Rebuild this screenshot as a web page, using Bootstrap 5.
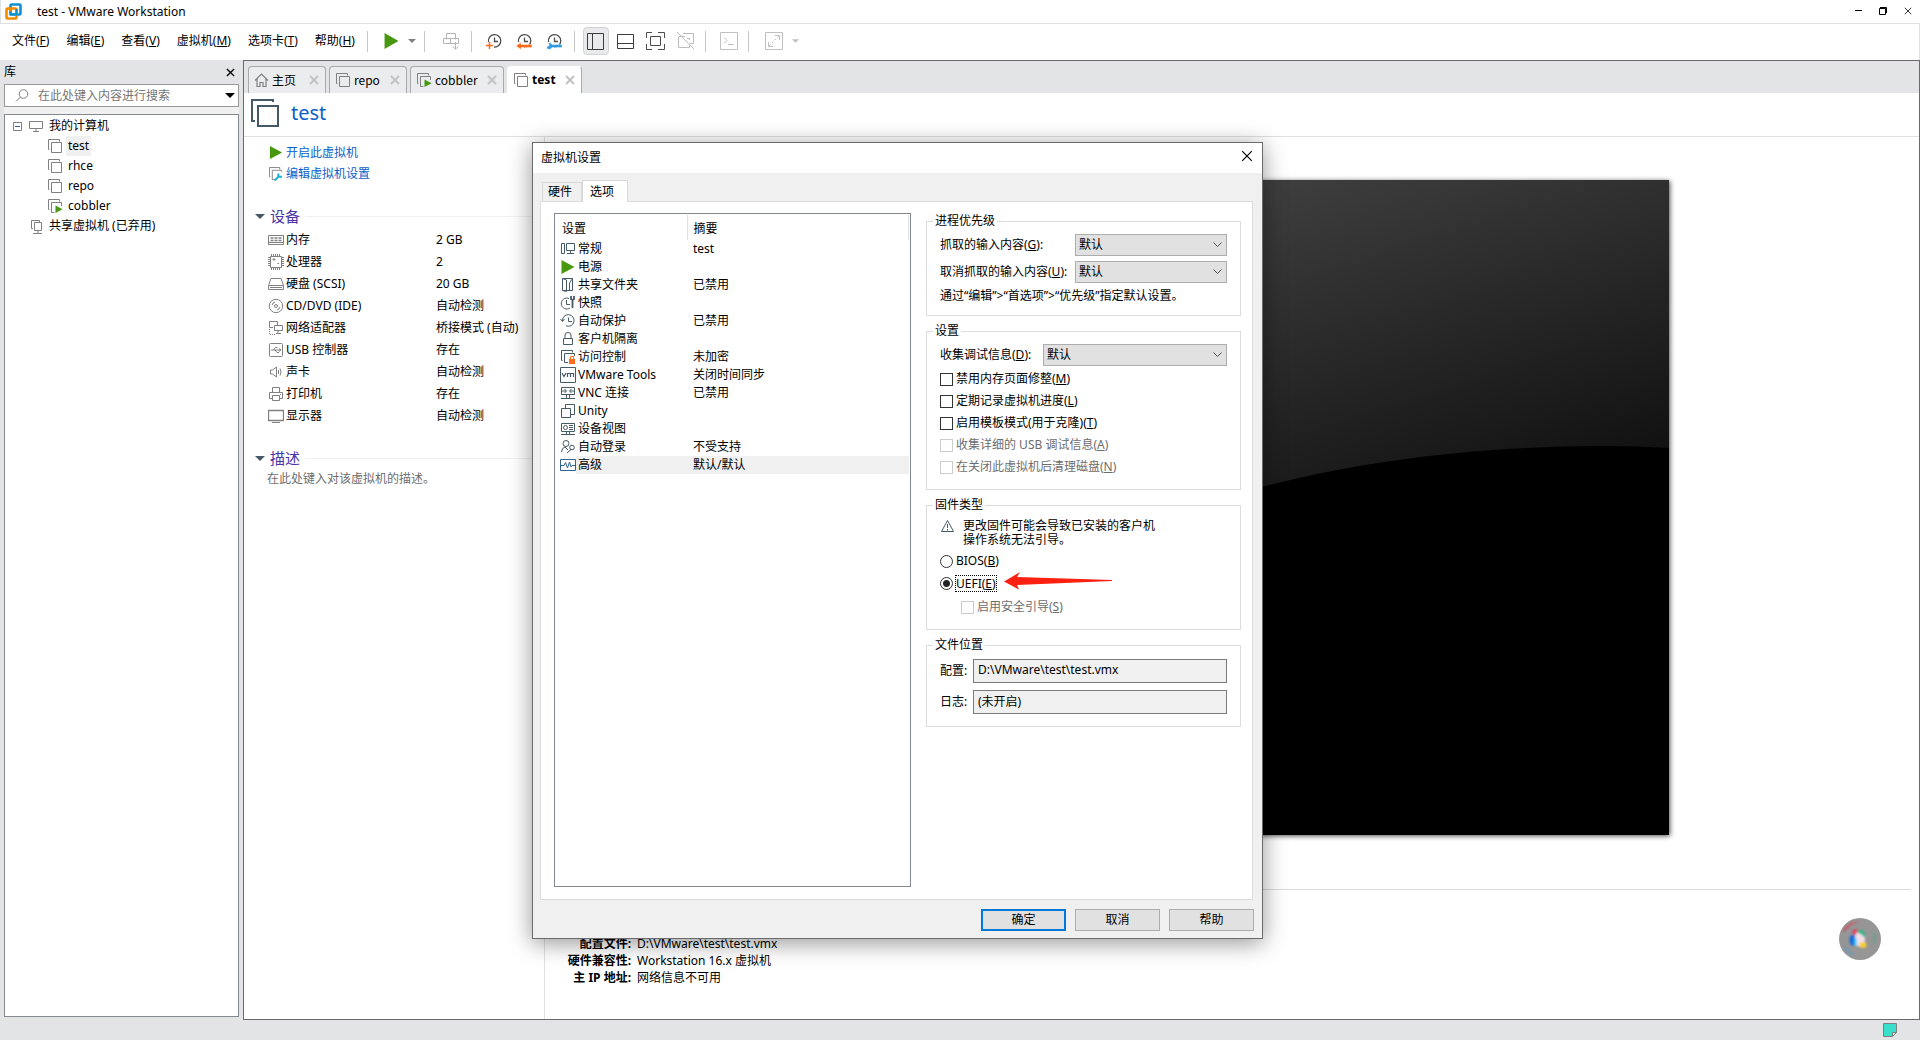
<!DOCTYPE html>
<html lang="zh-CN">
<head>
<meta charset="utf-8">
<meta name="viewport" content="width=device-width, initial-scale=1">
<title>test - VMware Workstation</title>
<link href="https://cdn.jsdelivr.net/npm/bootstrap@5.3.0/dist/css/bootstrap.min.css" rel="stylesheet">
<style>
  body { font: 12px/16px "Noto Sans", "Noto Sans CJK SC", sans-serif; color: #000; background: #e3e4e6; }
  button, input, select { font: inherit; color: inherit; }
  svg { display: block; flex: none; fill: none; stroke: #808080; }
  .plain { background: none; border: 0; padding: 0; }
  .titlebar { height: 24px; border-bottom: 1px solid #e0e0e0; }
  .titlebar h1 { font-size: 12px; line-height: 16px; margin: 0 0 0 15px; }
  .winbtns { gap: 17px; padding: 0 8px 2px; }
  .winbtns svg { stroke: #000; }
  .menubar { height: 36px; border-right: 1px solid #e0e0e0; padding: 0 0 2px 12px; gap: 12px; }
  .menus { gap: 17px; }
  .menus a { color: #000; text-decoration: none; }
  .vsep { width: 1px; height: 21px; background: #c6c6c6; }
  .tool { width: 30px; height: 28px; display: flex; align-items: center; justify-content: center; }
  .tool.on { background: #e9eaeb; border: 1px solid #d2d2d2; border-radius: 4px; width: 26px; margin: 0 2px; }
  .withcaret { display: flex; align-items: center; gap: 9px; }
  .workspace { min-height: 0; }
  .library { width: 243px; padding: 0 4px 3px; }
  .library header { height: 24px; }
  .library header svg { stroke: #000; stroke-width: 1.5; }
  .searchbox { height: 23px; border: 1px solid #999; background: #fff; padding: 0 3px 0 10px; gap: 9px; }
  .searchbox input { border: 0; outline: 0; min-width: 0; background: none; padding: 0; }
  .searchbox input::placeholder { color: #757575; opacity: 1; }
  .searchgap { height: 7px; background: #f0f0f0; }
  .tree { border: 1px solid #828790; padding: 1px 0 0 8px; }
  .tree li { height: 20px; display: flex; align-items: center; gap: 3px; }
  .tree li span { padding: 0 2px; line-height: 20px; }
  .tree .root { gap: 4px; }
  .tree .host { margin-left: 3px; }
  .tree .leaf { padding-left: 34px; }
  .tree .shared { padding-left: 17px; }
  .tree .picked { background: #f0f0f0; }
  .workarea { border: 1px solid #6a6a6c; min-width: 0; }
  .doctabs { height: 32px; padding: 5px 4px 0; gap: 3px; background: #e3e4e6; }
  .doctab { height: 27px; padding: 0 6px 0 5px; border: 1px solid #a9a9a9; border-bottom: 0; border-radius: 4px 4px 0 0; background: #ebecee; width: 78px; display: flex; align-items: center; gap: 3px; font-family: "Noto Sans CJK SC", sans-serif; }
  .doctab.wide { width: 94px; }
  .doctab.active { background: #fff; width: 75px; border-left-color: #fff; border-top-color: #fff; font-weight: 700; font-family: "Noto Sans", sans-serif; }
  .doctab svg.x { stroke: #c3c3c3; stroke-width: 2; margin-left: auto; }
  .vmhead { height: 44px; border-bottom: 1px solid #e0e0e0; padding: 0 7px 2px; gap: 11px; }
  .vmhead h2 { font-size: 20px; line-height: 24px; color: #0a61c9; margin: 0 0 2px; font-weight: 400; }
  .summary { width: 301px; border-right: 1px solid #e0e0e0; }
  .summary a { display: flex; align-items: center; gap: 3px; color: #0a61c9; text-decoration: none; height: 21px; }
  .cmds { padding: 5px 0 0 25px; height: 66px; }
  .summary h3 { font-size: 15px; line-height: 18px; color: #4a36a8; margin: 0; font-weight: 400; }
  .sect { gap: 5px; padding-left: 11px; height: 26px; }
  .sect hr { margin: 0; border-color: #c8c8c8; }
  .devs { margin: 0 0 18px 24px; }
  .devs td { height: 22px; padding: 0; }
  .devs td:first-child { width: 168px; }
  .devname { display: flex; align-items: center; gap: 2px; }
  .note { color: #6e6e6e; padding-left: 23px; margin: 0; }
  .stage { min-width: 0; padding: 43px 8px 0; }
  .screen { width: 874px; max-width: 100%; height: 655px; background: linear-gradient(162deg, #505050, #0e0e0e 62%); box-shadow: 1px 1px 5px rgba(0,0,0,.7); overflow: hidden; }
  .screen svg { width: 100%; height: 100%; stroke: none; }
  .facts { margin-top: 54px; border-top: 1px solid #dcdcdc; padding-top: 28px; }
  .facts dl { display: grid; grid-template-columns: 78px 1fr; column-gap: 6px; margin: 0; line-height: 17px; }
  .facts dt { text-align: right; }
  .facts dd { margin: 0; }
  .statusbar { height: 20px; padding-right: 23px; }
  .orb { position: absolute; right: 39px; bottom: 80px; width: 42px; height: 42px; }
  .dlg { position: absolute; left: 532px; top: 142px; width: 731px; background: #f0f0f0; border: 1px solid #6b6b6b; box-shadow: 0 4px 22px rgba(0,0,0,.42); }
  .dlg header { height: 30px; background: #fff; padding: 0 9px 0 8px; }
  .dlg header h2 { font-size: 12px; line-height: 16px; margin: 0; font-weight: 400; }
  .dlg header svg { stroke: #000; }
  .dlg .nav { padding: 7px 9px 0; align-items: flex-end; }
  .dlgtab { border: 1px solid #d9d9d9; border-bottom: 0; height: 19px; padding: 0 5px; background: #f0f0f0; width: 40px; line-height: 18px; text-align: left; }
  .dlgtab.active { background: #fff; height: 22px; width: 46px; padding: 0 7px; margin-bottom: -1px; position: relative; line-height: 20px; }
  .panel { margin: 0 9px 0 7px; border: 1px solid #dcdcdc; background: #fff; padding: 11px 11px 12px 13px; gap: 15px; }
  .optlist { width: 357px; height: 674px; border: 1px solid #828790; padding: 1px; }
  .optlist table { width: 100%; table-layout: fixed; }
  .optlist th { height: 25px; font-weight: 400; padding: 2px 6px 0; border-right: 1px solid #e0e0e0; }
  .optlist thead th:first-child { width: 131px; }
  .optlist td { height: 18px; padding: 0 6px; white-space: nowrap; }
  .optlist td:first-child { padding-left: 4px; }
  .optlist tr.on td { background: #f0f0f0; }
  .optlist tr.on td:first-child { background: linear-gradient(to right, #fff 20px, #f0f0f0 20px); }
  .optlist tr.on svg { stroke: #2f6390; }
  .optname { display: flex; align-items: center; gap: 2px; height: 18px; }
  .optname svg, .warn { stroke: #475a68; }
  .box { border: 1px solid #dcdcdc; padding: 0 13px; margin: 0 0 7px; }
  .box legend { float: none; font-size: 12px; line-height: 16px; width: auto; margin: 0 0 0 -7px; padding: 0 2px; }
  .box.prio { height: 103px; }
  .box.opts { height: 167px; }
  .box.firm { height: 133px; }
  .box.files { height: 90px; margin: 0; }
  .dropdown-box { appearance: none; width: 152px; border: 1px solid #adadad; border-radius: 0; height: 22px; line-height: 16px; padding: 2px 20px 2px 3px; background: #e1e1e1 url("data:image/svg+xml,%3Csvg xmlns='http://www.w3.org/2000/svg' width='9' height='6'%3E%3Cpath d='M.5.5l4 4 4-4' fill='none' stroke='%23505050'/%3E%3C/svg%3E") no-repeat right 4px center; }
  .dropdown-box.long { width: 184px; }
  .line { display: flex; align-items: center; height: 22px; position: relative; }
  .line.tall { height: 27px; }
  .line.first { margin-top: 2px; }
  .line.path { height: 31px; }
  .line.path label { width: 33px; }
  .line.pick { gap: 3px; }
  .line.nested { padding-left: 21px; height: 26px; }
  .line input[type=checkbox], .line input[type=radio] { appearance: none; width: 13px; height: 13px; margin: 0; border: 1px solid #333; background: #fff; flex: none; }
  .line input[type=radio] { border-radius: 50%; }
  .line input[type=radio]:checked { background: radial-gradient(#222 0 3px, #fff 4px); }
  .line input:disabled { border-color: #ccc; }
  .line input:disabled + label { color: #6d6d6d; }
  .alertline { line-height: 14px; margin: 6px 0 3px; gap: 8px; }
  .focused { outline: 1px dotted #000; line-height: 15px; }
  .pathbox { flex: 1; min-width: 0; height: 24px; border: 1px solid #7a7a7a; border-radius: 0; background: #f0f0f0; padding: 0 4px 2px; }
  .dlg footer { padding: 9px 8px 7px; gap: 9px; }
  .dlgbtn { width: 85px; height: 22px; border: 1px solid #adadad; background: #e1e1e1; padding: 0; line-height: 20px; }
  .dlgbtn.default { border: 2px solid #0078d7; line-height: 18px; }
  .arrow { position: absolute; left: 64px; top: 0; stroke: none; }
</style>
</head>
<body class="d-flex flex-column vh-100 overflow-hidden position-relative">
<svg width="0" height="0" class="position-absolute">
  <defs>
    <symbol id="vm" viewBox="0 0 16 16"><path d="M2.500 11.500H1.500V1.500H12.500V3.500M4.500 4.500H14.500V14.500H4.500z"/></symbol>
    <symbol id="vmrun" viewBox="0 0 16 16"><path d="M2.500 11.500H1.500V1.500H12.500V3.500M7.500 14.500H4.500V4.500H14.500V8"/><path d="M8.500 7.500V15L15.500 11.300z" fill="#47980f" stroke="none"/></symbol>
    <symbol id="play" viewBox="0 0 16 16"><path d="M1.500 1V15L14.500 8z" fill="#47980f" stroke="none"/></symbol>
    <symbol id="clock" viewBox="0 0 16 16"><path d="M2.500 9A6.200 6.200 0 1 1 8 14M8.500 4.500V8.500H12" stroke="#4c4c4c" stroke-width="1.300"/></symbol>
    <symbol id="x" viewBox="0 0 10 10"><path d="M1 1L9 9M9 1L1 9"/></symbol>
    <symbol id="caret" viewBox="0 0 8 4"><path d="M0 0H8L4 4z" fill="#808080" stroke="none"/></symbol>
  </defs>
</svg>

<div class="titlebar bg-white d-flex align-items-center border-start border-black ps-1">
  <svg width="17" height="17" viewBox="0 0 17 17"><rect x="5.500" y="1.500" width="10" height="10" rx="1" stroke="#0f91d0" stroke-width="2.600"/><rect x="1.500" y="5.500" width="10" height="10" rx="1" stroke="#f38b00" stroke-width="2.600"/><path d="M5.500 8V11.500H11.500V6" stroke="#0f91d0" stroke-width="2.200"/><path d="M5.500 8.500V5.500H9" stroke="#f38b00" stroke-width="1.500"/></svg>
  <h1 class="fw-normal">test - VMware Workstation</h1>
  <div class="winbtns ms-auto d-flex align-items-center">
    <button class="plain" aria-label="最小化"><svg width="7" height="9" viewBox="0 0 7 9"><path d="M0 4.500H7"/></svg></button>
    <button class="plain" aria-label="还原"><svg width="8" height="8" viewBox="0 0 8 8"><path d="M.5 1.500H6.500V7.500H.5zM1 .5H7.500V6"/></svg></button>
    <button class="plain" aria-label="关闭"><svg width="8" height="8"><use href="#x"/></svg></button>
  </div>
</div>

<nav class="menubar bg-white d-flex align-items-center">
  <div class="menus d-flex">
    <a href="#">文件(<u>F</u>)</a><a href="#">编辑(<u>E</u>)</a><a href="#">查看(<u>V</u>)</a><a href="#">虚拟机(<u>M</u>)</a><a href="#">选项卡(<u>T</u>)</a><a href="#">帮助(<u>H</u>)</a>
  </div>
  <div class="d-flex align-items-center">
    <span class="vsep"></span>
    <button class="plain withcaret ms-3" aria-label="开启"><svg width="15" height="16" viewBox="1 1 14 14" preserveAspectRatio="none"><use href="#play" width="16" height="16"/></svg><svg width="8" height="4"><use href="#caret"/></svg></button>
    <span class="vsep ms-2 me-1"></span>
    <button class="plain tool ms-2" aria-label="发送"><svg width="17" height="17" viewBox="0 0 17 17"><path d="M3.500 6.500V.5H12.500V6.500M.5 5.500H7.500V10.500H.5zM7.500 5.500H15.500V10.500H7.500zM12.500 9V16M9.500 13.500L12.500 16L15.500 13.500" stroke="#b5b5b5"/></svg></button>
    <span class="vsep ms-1"></span>
    <button class="plain tool ms-2" aria-label="拍摄快照"><svg width="17" height="17" viewBox="0 0 17 17"><use href="#clock" width="16" height="16"/><path d="M3.500 9V16M0 12.500H7" stroke="#ff6a1a" stroke-width="1.500"/></svg></button>
    <button class="plain tool" aria-label="恢复快照"><svg width="17" height="17" viewBox="0 0 17 17"><use href="#clock" width="16" height="16"/><path d="M0 13L5 9.500V11.500H16V14.500H5V16.500z" fill="#ff6a1a" stroke="#fff" stroke-width=".4"/></svg></button>
    <button class="plain tool" aria-label="管理快照"><svg width="17" height="17" viewBox="0 0 17 17"><use href="#clock" width="16" height="16"/><path d="M1 10.500H3V13H1.500L.5 15.500L4 16.500L6 14.500H16V11.500H6L4 9.500z" fill="#2e9be0" stroke="#fff" stroke-width=".4"/></svg></button>
    <span class="vsep ms-1 me-1"></span>
    <button class="plain tool on ms-1" aria-label="库"><svg width="17" height="17" viewBox="0 0 17 17"><path d="M.5.5H16.500V16.500H.5zM5.500 1V16" stroke="#3c3c3c"/></svg></button>
    <button class="plain tool" aria-label="缩略图"><svg width="17" height="17" viewBox="0 0 17 17"><path d="M.5 1.500H16.500V15.500H.5zM1 10.500H16" stroke="#3c3c3c"/></svg></button>
    <button class="plain tool" aria-label="全屏"><svg width="19" height="18" viewBox="0 0 19 18"><path d="M.5 6V.5H6M12 .5H18.500V6M18.500 12V17.500H12M6 17.500H.5V12M4.500 4.500H14.500V13.500H4.500z" stroke="#4c4c4c"/></svg></button>
    <button class="plain tool" aria-label="Unity"><svg width="18" height="18" viewBox="0 0 18 18"><path d="M0 0L17 17M6 1.500H16.500V11.500H13M10 6.500H12.500V8M8 4.500H1.500V15.500H12.500V12" stroke="#bdbdbd"/></svg></button>
    <span class="vsep ms-1 me-2"></span>
    <button class="plain tool" aria-label="控制台"><svg width="18" height="18" viewBox="0 0 18 18"><path d="M.5.5H17.500V17.500H.5zM4 5.500L7 8.500L4 11.500M8 12.500H14" stroke="#c0c0c0"/></svg></button>
    <span class="vsep ms-1"></span>
    <button class="plain withcaret ms-3" aria-label="拉伸"><svg width="18" height="18" viewBox="0 0 18 18"><path d="M.5.5H17.500V17.500H.5zM10 3.500H14.500V8M3.500 10V14.500H8" stroke="#c0c0c0"/><path d="M14 4L4 14" stroke="#c0c0c0" stroke-dasharray="2 2"/></svg><svg width="7" height="4" class="opacity-50"><use href="#caret"/></svg></button>
  </div>
</nav>

<main class="workspace d-flex flex-grow-1">
  <aside class="library d-flex flex-column">
    <header class="d-flex align-items-center justify-content-between"><span>库</span><button class="plain pe-1" aria-label="关闭库"><svg width="9" height="9"><use href="#x"/></svg></button></header>
    <div class="searchbox d-flex align-items-center">
      <svg width="14" height="14" viewBox="0 0 14 14"><circle cx="8.500" cy="5" r="4.300"/><path d="M5.500 8L1 12.500"/></svg>
      <input class="flex-grow-1" type="search" placeholder="在此处键入内容进行搜索" aria-label="搜索">
      <svg width="10" height="5" viewBox="0 0 10 5"><path d="M0 0H10L5 5z" fill="#000" stroke="none"/></svg>
    </div>
    <div class="searchgap"></div>
    <ul class="tree list-unstyled bg-white flex-grow-1 m-0">
      <li class="root"><svg width="9" height="9" viewBox="0 0 9 9"><path d="M.5.5H8.500V8.500H.5z"/><path d="M2 4.500H7" stroke="#33569c"/></svg><svg class="host" width="14" height="12" viewBox="0 0 14 12"><path d="M.5 1.500H13.500V8.500H.5zM7 9V11M4 11.500H10"/></svg><span>我的计算机</span></li>
      <li class="leaf"><svg width="16" height="16"><use href="#vm"/></svg><span class="picked">test</span></li>
      <li class="leaf"><svg width="16" height="16"><use href="#vm"/></svg><span>rhce</span></li>
      <li class="leaf"><svg width="16" height="16"><use href="#vm"/></svg><span>repo</span></li>
      <li class="leaf"><svg width="16" height="16"><use href="#vmrun"/></svg><span>cobbler</span></li>
      <li class="shared"><svg width="14" height="15" viewBox="0 0 14 15"><path d="M3 9.500H1.500V1.500H9.500V3M4.500 3.500H11.500V11.500H4.500zM8 12V14M3 14.500H12"/></svg><span>共享虚拟机 (已弃用)</span></li>
    </ul>
  </aside>

  <section class="workarea bg-white flex-grow-1 d-flex flex-column">
    <div class="doctabs d-flex">
      <button class="doctab"><svg width="15" height="14" viewBox="0 0 14 14"><path d="M.5 7.500L7 1L13.500 7.500M2.500 6V13.500H5.500V9.500H8.500V13.500H11.500V6" stroke-width="1.200"/></svg><span>主页</span><svg class="x" width="10" height="10"><use href="#x"/></svg></button>
      <button class="doctab"><svg width="16" height="16"><use href="#vm"/></svg><span>repo</span><svg class="x" width="10" height="10"><use href="#x"/></svg></button>
      <button class="doctab wide"><svg width="16" height="16"><use href="#vmrun"/></svg><span>cobbler</span><svg class="x" width="10" height="10"><use href="#x"/></svg></button>
      <button class="doctab active"><svg width="16" height="16"><use href="#vm"/></svg><span>test</span><svg class="x" width="10" height="10"><use href="#x"/></svg></button>
    </div>
    <div class="vmhead d-flex align-items-center">
      <svg width="29" height="29" viewBox="0 0 29 29"><path d="M4 22H1V1H22V3M7 7H27V27H7z" stroke="#465967" stroke-width="2"/></svg>
      <h2>test</h2>
    </div>
    <div class="workspace d-flex flex-grow-1">
      <div class="summary flex-shrink-0">
        <div class="cmds">
          <a href="#"><svg width="14" height="15" viewBox="1 0 14 16"><use href="#play" width="16" height="16"/></svg>开启此虚拟机</a>
          <a href="#"><svg width="14" height="14" viewBox="1 1 15 15"><path d="M2.500 11.500H1.500V1.500H12.500V3.500M7.500 14.500H4.500V4.500H14.500V6"/><path d="M7 15.500L12 10.500M11 8V11.500H15" stroke="#18b4d8" stroke-width="2.200"/></svg>编辑虚拟机设置</a>
        </div>
        <div class="sect d-flex align-items-center"><svg width="10" height="5" viewBox="0 0 10 5"><path d="M0 0H10L5 5z" fill="#465967" stroke="none"/></svg><h3>设备</h3><hr class="flex-grow-1"></div>
        <table class="devs">
          <tr><td><div class="devname"><svg width="16" height="16" viewBox="0 0 16 16"><path d="M.5 3.500H15.500V12.500H.5zM1 10.500H15"/><path d="M2.500 6H5.500M6.500 6H9.500M10.500 6H13.500M2.500 8.500H5.500M6.500 8.500H9.500M10.500 8.500H13.500" stroke-width="1.500"/></svg>内存</div></td><td>2 GB</td></tr>
          <tr><td><div class="devname"><svg width="16" height="16" viewBox="0 0 16 16"><path d="M2.500 2.500H13.500V13.500H2.500zM5 5H7V6H5zM9.500 9.500H11"/><path d="M1 3V13M15 3V13" stroke-width="2" stroke-dasharray="1 1"/><path d="M3 1H13M3 15H13" stroke-width="2" stroke-dasharray="1 1"/></svg>处理器</div></td><td>2</td></tr>
          <tr><td><div class="devname"><svg width="16" height="16" viewBox="0 0 16 16"><path d="M.5 9.500L3 2.500H13L15.500 9.500V13.500H.5zM1 9.500H15M2 11.500H14"/></svg>硬盘 (SCSI)</div></td><td>20 GB</td></tr>
          <tr><td><div class="devname"><svg width="16" height="16" viewBox="0 0 16 16"><circle cx="8" cy="8" r="6.700"/><circle cx="8" cy="8" r="1.500"/><path d="M4 7A4 4 0 0 1 7 4M12 9A4 4 0 0 1 9 12"/></svg>CD/DVD (IDE)</div></td><td>自动检测</td></tr>
          <tr><td><div class="devname"><svg width="16" height="16" viewBox="0 0 16 16"><path d="M5 7.500H1.500V1.500H9.500V5M6.500 5.500H14.500V10.500H6.500zM10 11V13M8 13.500H13"/><path d="M1.500 9V14.500H8" stroke-dasharray="1 1"/></svg>网络适配器</div></td><td>桥接模式 (自动)</td></tr>
          <tr><td><div class="devname"><svg width="16" height="16" viewBox="0 0 16 16"><rect x="1.500" y="1.500" width="13" height="13" rx="1"/><path d="M3 8H13M5.500 8L7.500 5.500H9.500M7 8L9 10.500H11M11 6.500L13 8L11 9.500"/></svg>USB 控制器</div></td><td>存在</td></tr>
          <tr><td><div class="devname"><svg width="16" height="16" viewBox="0 0 16 16"><path d="M2.500 6H4.500L8.500 3V13L4.500 10H2.500zM10.500 6V10M12 4.500Q14 8 12 11.500"/></svg>声卡</div></td><td>自动检测</td></tr>
          <tr><td><div class="devname"><svg width="16" height="16" viewBox="0 0 16 16"><path d="M4.500 6V1.500H11.500V6M4 12.500H1.500V6.500H14.500V12.500H12M4.500 9.500H11.500V14.500H4.500zM12 8.500H13"/></svg>打印机</div></td><td>存在</td></tr>
          <tr><td><div class="devname"><svg width="16" height="16" viewBox="0 0 16 16"><path d="M.5 2.500H15.500V12.500H.5z" stroke-width="1.300"/><path d="M4 14.500H12"/></svg>显示器</div></td><td>自动检测</td></tr>
        </table>
        <div class="sect d-flex align-items-center"><svg width="10" height="5" viewBox="0 0 10 5"><path d="M0 0H10L5 5z" fill="#465967" stroke="none"/></svg><h3>描述</h3><hr class="flex-grow-1"></div>
        <p class="note">在此处键入对该虚拟机的描述。</p>
      </div>
      <div class="stage flex-grow-1">
        <div class="screen mx-auto"><svg viewBox="0 0 874 655" preserveAspectRatio="none"><path d="M0 560C150 430 300 345 467 307C560 282 680 266 809 266Q845 266 874 268V655H0z" fill="#000"/></svg></div>
        <div class="facts">
          <dl><dt>状态:</dt><dd>已关机</dd><dt>配置文件:</dt><dd>D:\VMware\test\test.vmx</dd><dt>硬件兼容性:</dt><dd>Workstation 16.x 虚拟机</dd><dt>主 IP 地址:</dt><dd>网络信息不可用</dd></dl>
        </div>
      </div>
    </div>
  </section>
</main>

<footer class="statusbar d-flex align-items-center justify-content-end">
  <svg width="14" height="14" viewBox="0 0 14 14"><path d="M.5.5H13.500V9.500L9.500 13.500H.5z" fill="#38e0cc"/><path d="M13.500 9.500H9.500V13.500z" fill="#c9ebe7"/></svg>
</footer>

<svg class="orb" viewBox="0 0 42 42">
  <defs><filter id="soft"><feGaussianBlur stdDeviation="1"/></filter></defs>
  <circle cx="21" cy="21" r="21" fill="#969696" stroke="none"/>
  <g filter="url(#soft)" stroke="none"><path d="M4 13Q10 3 21 3Q12 5 5 14z" fill="#d8485f"/><path d="M5 27Q9 34 16 37Q11 37 6 31z" fill="#4f9fc4"/><path d="M34 12Q39 20 34 28Q36 20 34 12z" fill="#4ca582"/><ellipse cx="17" cy="14" rx="4" ry="3" fill="#d84a68"/><ellipse cx="13.500" cy="22" rx="3" ry="5.500" fill="#1769dd"/><ellipse cx="21" cy="21" rx="5" ry="8" fill="#f4dfe8"/><path d="M18 14Q21 9 25 14L27 21L23 17z" fill="#2cb88c"/><ellipse cx="24" cy="27" rx="3.500" ry="3" fill="#f6cf2e"/><ellipse cx="16.500" cy="24" rx="1.500" ry="4" fill="#3dcdf5"/></g>
</svg>

<div class="dlg" role="dialog" aria-labelledby="dlgTitle">
  <header class="d-flex align-items-center justify-content-between"><h2 id="dlgTitle">虚拟机设置</h2><button class="plain pb-1" aria-label="关闭"><svg width="12" height="12"><use href="#x"/></svg></button></header>
  <div class="nav" role="tablist"><button class="dlgtab" role="tab">硬件</button><button class="dlgtab active" role="tab" aria-selected="true">选项</button></div>
  <div class="panel d-flex">
    <div class="optlist flex-shrink-0">
      <table>
        <thead><tr><th>设置</th><th>摘要</th></tr></thead>
        <tbody>
          <tr><td><div class="optname"><svg width="16" height="16" viewBox="0 0 16 16"><path d="M1.500 2.500H4.500V12.500H1.500zM6.500 2.500H14.500V9.500H6.500zM10.500 10V12M7 12.500H14"/></svg>常规</div></td><td>test</td></tr>
          <tr><td><div class="optname"><svg width="16" height="16"><use href="#play"/></svg>电源</div></td><td></td></tr>
          <tr><td><div class="optname"><svg width="16" height="16" viewBox="0 0 16 16"><path d="M2.500 1.500H12.500V13.500H2.500zM2.500 1.500L6.500 3V14.500L2.500 13.500M12.500 1.500L9.500 6V14"/></svg>共享文件夹</div></td><td>已禁用</td></tr>
          <tr><td><div class="optname"><svg width="16" height="16" viewBox="0 0 16 16"><path d="M10 13A5.500 5.500 0 1 1 9 3.500M6.500 5V9.500H10"/><path d="M11 1V4L12.500 5L14 4V1M12.500 5V13" stroke-width="1.800"/></svg>快照</div></td><td></td></tr>
          <tr><td><div class="optname"><svg width="16" height="16" viewBox="0 0 16 16"><path d="M2.500 8A5.800 5.800 0 1 1 6 12.800M8.500 4.500V8.500H12M.5 6L2.500 8.500L4.500 6"/></svg>自动保护</div></td><td>已禁用</td></tr>
          <tr><td><div class="optname"><svg width="16" height="16" viewBox="0 0 16 16"><path d="M3.500 7.500H12.500V13.500H3.500zM5 7V4Q5 1.500 8 1.500Q11 1.500 11 4V7"/></svg>客户机隔离</div></td><td></td></tr>
          <tr><td><div class="optname"><svg width="16" height="16" viewBox="0 0 16 16"><path d="M2.500 11.500H1.500V1.500H12.500V3.500M8 13.500H4.500V4.500H14.500V7"/><path d="M9 10H15V15H9z" fill="#ff6a1a" stroke="none"/><path d="M10.500 10V7.500H13.500V10" stroke="#ff6a1a"/></svg>访问控制</div></td><td>未加密</td></tr>
          <tr><td><div class="optname"><svg width="16" height="16" viewBox="0 0 16 16"><path d="M.5.5H15.500V15.500H.5z"/><path d="M2 6L4 9.500L6 6M7.500 10V6.500H10.500V10M10.500 6.500H13.500V10" stroke-width="1.200"/></svg>VMware Tools</div></td><td>关闭时间同步</td></tr>
          <tr><td><div class="optname"><svg width="16" height="16" viewBox="0 0 16 16"><path d="M1.500 2.500H14.500V9.500H1.500zM6.500 10V13M9.500 10V13M1 13.500H15M2 6H6M10 6H14M4.500 4L6.500 6L4.500 8M11.500 4L9.500 6L11.500 8"/></svg>VNC 连接</div></td><td>已禁用</td></tr>
          <tr><td><div class="optname"><svg width="16" height="16" viewBox="0 0 16 16"><path d="M1.500 5.500H10.500V14.500H1.500zM5.500 5V1.500H14.500V11.500H11"/></svg>Unity</div></td><td></td></tr>
          <tr><td><div class="optname"><svg width="16" height="16" viewBox="0 0 16 16"><path d="M1.500 2.500H14.500V10.500H1.500zM6.500 11V13M9.500 11V13M1 13.500H15M9 4.500H13M9 6.500H13M9 8.500H13"/><circle cx="5.500" cy="6.500" r="2"/></svg>设备视图</div></td><td></td></tr>
          <tr><td><div class="optname"><svg width="16" height="16" viewBox="0 0 16 16"><circle cx="6" cy="4.500" r="3"/><path d="M1.500 13Q2 8.500 5 8L8 11M7 14L11 10.500"/><circle cx="12" cy="8.500" r="2.300"/></svg>自动登录</div></td><td>不受支持</td></tr>
          <tr class="on"><td><div class="optname"><svg width="16" height="16" viewBox="0 0 16 16"><path d="M.5 2.500H15.500V13.500H.5zM1 8.500H4L5.500 5.500L7.500 11L9.500 5L11 10L12 8.500H15"/></svg>高级</div></td><td>默认/默认</td></tr>
        </tbody>
      </table>
    </div>
    <form class="flex-grow-1">
      <fieldset class="box prio">
        <legend>进程优先级</legend>
        <div class="line tall first"><label for="grab" class="flex-grow-1">抓取的输入内容(<u>G</u>):</label><select id="grab" class="dropdown-box"><option>默认</option></select></div>
        <div class="line tall"><label for="ungrab" class="flex-grow-1">取消抓取的输入内容(<u>U</u>):</label><select id="ungrab" class="dropdown-box"><option>默认</option></select></div>
        <div class="line">通过“编辑”&gt;“首选项”&gt;“优先级”指定默认设置。</div>
      </fieldset>
      <fieldset class="box opts">
        <legend>设置</legend>
        <div class="line tall first"><label for="dbg" class="flex-grow-1">收集调试信息(<u>D</u>):</label><select id="dbg" class="dropdown-box long"><option>默认</option></select></div>
        <div class="line pick"><input type="checkbox" id="c1"><label for="c1">禁用内存页面修整(<u>M</u>)</label></div>
        <div class="line pick"><input type="checkbox" id="c2"><label for="c2">定期记录虚拟机进度(<u>L</u>)</label></div>
        <div class="line pick"><input type="checkbox" id="c3"><label for="c3">启用模板模式(用于克隆)(<u>T</u>)</label></div>
        <div class="line pick"><input type="checkbox" id="c4" disabled><label for="c4">收集详细的 USB 调试信息(<u>A</u>)</label></div>
        <div class="line pick"><input type="checkbox" id="c5" disabled><label for="c5">在关闭此虚拟机后清理磁盘(<u>N</u>)</label></div>
      </fieldset>
      <fieldset class="box firm">
        <legend>固件类型</legend>
        <div class="alertline d-flex"><svg class="warn" width="15" height="14" viewBox="0 0 15 14"><path d="M7.500 1.500L13.500 12.500H1.500zM7.500 5V9M7.500 10V11.500"/></svg><div>更改固件可能会导致已安装的客户机<br>操作系统无法引导。</div></div>
        <div class="line pick"><input type="radio" name="fw" id="bios"><label for="bios">BIOS(<u>B</u>)</label></div>
        <div class="line pick"><input type="radio" name="fw" id="uefi" checked><label for="uefi" class="focused">UEFI(<u>E</u>)</label>
          <svg class="arrow" width="109" height="18" viewBox="0 0 109 18"><path d="M0 9.500L16 0L13 5L108 8V9L13 13L15 17.500z" fill="#fb2010" stroke="none"/></svg></div>
        <div class="line pick nested"><input type="checkbox" id="sec" disabled><label for="sec">启用安全引导(<u>S</u>)</label></div>
      </fieldset>
      <fieldset class="box files">
        <legend>文件位置</legend>
        <div class="line path first"><label for="cfg">配置:</label><input id="cfg" class="pathbox" readonly value="D:\VMware\test\test.vmx"></div>
        <div class="line path"><label for="log">日志:</label><input id="log" class="pathbox" readonly value="(未开启)"></div>
      </fieldset>
    </form>
  </div>
  <footer class="d-flex justify-content-end"><button class="dlgbtn default">确定</button><button class="dlgbtn">取消</button><button class="dlgbtn">帮助</button></footer>
</div>
<script src="https://cdn.jsdelivr.net/npm/bootstrap@5.3.0/dist/js/bootstrap.bundle.min.js"></script>
</body>
</html>
